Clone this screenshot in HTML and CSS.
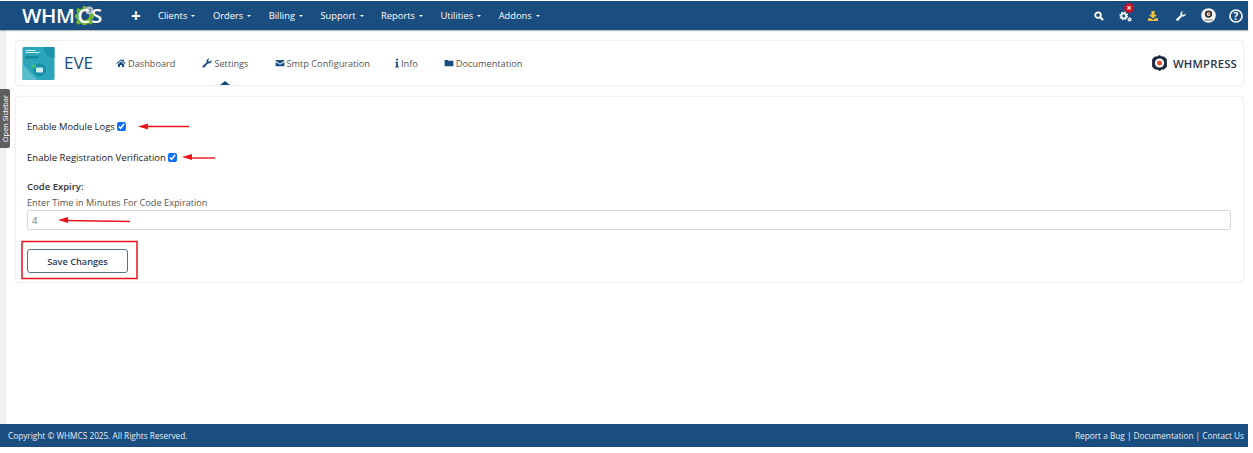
FILE: index.html
```html
<!DOCTYPE html>
<html lang="en">
<head>
<meta charset="utf-8">
<title>EVE Settings</title>
<link rel="stylesheet" href="styles.css">
</head>
<body>
<div class="frame">
  <header class="topbar">
    <div class="logo">WHM<span class="logo-c"><svg class="gear" viewBox="0 0 24 24"><path fill="#74b72e" d="M10 0h4l.7 3.100 2.500 1 2.700-1.700 2.800 2.800-1.700 2.700 1 2.500 3 .6v4l-3 .7-1 2.400 1.700 2.700-2.800 2.800-2.700-1.700-2.500 1-.7 3.100h-4l-.7-3.100-2.500-1-2.700 1.700-2.800-2.800 1.700-2.700-1-2.400-3-.7v-4l3-.6 1-2.500L1.300 5.200 4.100 2.400l2.700 1.700 2.500-1z"/><circle cx="12" cy="12" r="6" fill="#1a4d80"/><circle cx="18" cy="5.500" r="5" fill="#b9c4c4"/><circle cx="18" cy="5.500" r="2" fill="#1a4d80"/></svg><b>C</b></span>S</div>
    <nav class="mainnav">
      <a class="plus">+</a>
      <a>Clients<i class="caret"></i></a>
      <a>Orders<i class="caret"></i></a>
      <a>Billing<i class="caret"></i></a>
      <a>Support<i class="caret"></i></a>
      <a>Reports<i class="caret"></i></a>
      <a>Utilities<i class="caret"></i></a>
      <a>Addons<i class="caret"></i></a>
    </nav>
    <div class="tools">
      <svg class="tool search" viewBox="0 0 16 16"><circle cx="6.500" cy="6.500" r="4.500" fill="none" stroke="#fff" stroke-width="2.800"/><path d="M10 10l4.500 4.500" stroke="#fff" stroke-width="3.200"/></svg>
      <span class="alert-wrap">
        <svg class="tool cogs" viewBox="0 0 16 16" fill="none" stroke="#fff"><circle cx="5.800" cy="8.500" r="3" stroke-width="2.200"/><circle cx="5.800" cy="8.500" r="4.700" stroke-width="1.400" stroke-dasharray="2 1.700"/><circle cx="13" cy="13" r="1.400" stroke-width="1.500"/><circle cx="13" cy="13" r="2.400" stroke-width=".8" stroke-dasharray="1 .9"/></svg>
        <span class="badge">×</span>
      </span>
      <svg class="tool dl" viewBox="0 0 16 16"><path fill="#f0c13a" d="M5.500 0h5v6h4L8 12 1.500 6h4zM0 11.500h4.500L8 14.500l3.500-3H16V16H0z"/></svg>
      <svg class="tool wrench" viewBox="0 0 16 16"><path fill="#fff" d="M15.700 4.200a4.400 4.400 0 0 1-5.900 4.300L3.800 15a2 2 0 0 1-2.900-2.800L7.400 6.300A4.400 4.400 0 0 1 12 .3L9.500 2.900l.7 2.600 2.700.7 2.500-2.600z"/></svg>
      <svg class="tool avatar" viewBox="0 0 16 16"><circle cx="8" cy="8" r="7.800" fill="#f4f4f4"/><circle cx="8" cy="6.500" r="3.900" fill="#2d2d2d"/><circle cx="8" cy="6.500" r="2" fill="#fff"/><circle cx="8" cy="6.500" r="1.100" fill="#e8552d"/><path d="M3.500 12.800h9" stroke="#9a9a9a" stroke-width="1.500"/></svg>
      <svg class="tool help" viewBox="0 0 16 16"><circle cx="8" cy="8" r="6.900" fill="none" stroke="#fff" stroke-width="1.800"/><text x="8" y="12" class="qmark" text-anchor="middle">?</text></svg>
    </div>
  </header>

  <div class="body">
    <div class="sidebar-strip"><button class="open-sidebar"><span>Open Sidebar</span></button></div>
    <main class="content">
      <section class="card head-card">
        <svg class="thumb" viewBox="0 0 32 33"><rect width="32" height="33" rx="1.500" fill="#2aa5ba"/><path d="M21 0a11 11 0 0 0 11 11V0z" fill="#1c93a8"/><path d="M0 17l15 16H0z" fill="#58bccb"/><rect x="3" y="3" width="10" height="1" fill="#d5f2f5"/><rect x="3" y="5" width="14" height="1" fill="#d5f2f5"/><rect x="3" y="9" width="13" height="2.500" fill="#12869c"/><circle cx="17" cy="23" r="6.500" fill="#158ea8"/><rect x="13.500" y="20.500" width="7" height="5" rx="1" fill="#cfeff4"/><circle cx="11.500" cy="19.500" r="2" fill="#3cc06d"/></svg>
        <h1 class="brand">EVE</h1>
        <nav class="tabs">
          <a class="tab t1"><svg class="ti" viewBox="0 0 16 16"><path fill="#1a4d80" d="M8 2L0.500 8.500l1 1L8 4l6.500 5.500 1-1L12.500 6V2.500h-2v1.800zM3 10v4.500h3.500V11h3v3.500H13V10L8 5.700z"/></svg>Dashboard</a>
          <a class="tab t2 active"><svg class="ti" viewBox="0 0 16 16"><path fill="#1a4d80" d="M15.500 4.500a4.300 4.300 0 0 1-5.800 4L4 14.800a1.700 1.700 0 0 1-2.600-2.300L7.500 6.600A4.300 4.300 0 0 1 12.200.8L9.800 3.300l.6 2 2 .6 2.500-2.500a4 4 0 0 1 .6 1.100z"/></svg>Settings</a>
          <a class="tab t3"><svg class="ti" viewBox="0 0 16 16"><path fill="#1a4d80" d="M1 3h14v1.500L8 9 1 4.500zM1 6.300V13h14V6.300L8 10.800z"/></svg>Smtp Configuration</a>
          <a class="tab t4"><svg class="ti narrow" viewBox="0 0 6 16"><path fill="#1a4d80" d="M1.500 1h3v3h-3zM.5 6h4v7h1.300v2H.3v-2h1.300V8H.5z"/></svg>Info</a>
          <a class="tab t5"><svg class="ti" viewBox="0 0 16 16"><path fill="#1a4d80" d="M1 3h5l1.500 1.500H15V13H1z"/></svg>Documentation</a>
        </nav>
        <div class="whmpress">
          <svg class="wp-mark" viewBox="0 0 24 26"><path fill="#1d2a3d" d="M12 0l4 2.500h3.500L24 7v12l-4.500 4.500H16L12 26l-4-2.500H4.500L0 19V7l4.500-4.500H8z"/><circle cx="12" cy="13" r="7.500" fill="#fff"/><circle cx="12" cy="13" r="4" fill="#ef4a23"/></svg>
          <span>WHMPRESS</span>
        </div>
      </section>

      <section class="card form-card">
        <div class="row first"><label>Enable Module Logs</label><input type="checkbox" checked></div>
        <div class="row second"><label>Enable Registration Verification</label><input type="checkbox" checked></div>
        <div class="expiry">
          <label class="bold">Code Expiry:</label>
          <p class="hint">Enter Time in Minutes For Code Expiration</p>
          <input class="text" type="text" value="4">
        </div>
        <button class="save">Save Changes</button>
      </section>
    </main>

    <svg class="marks" viewBox="0 0 1248 394" width="1248" height="394">
      <g fill="#e8141c" stroke="#e8141c">
        <path d="M146 96.500H189" stroke-width="1.400"/><path d="M138 96.500l10-3v6z" stroke="none"/>
        <path d="M190 128H215" stroke-width="1.400"/><path d="M182 127l10-3v6z" stroke="none"/>
        <path d="M66 190.500L130 191.500" stroke-width="1.400"/><path d="M58 190l10-3v6z" stroke="none"/>
      </g>
      <rect x="22" y="211.500" width="115" height="37" fill="none" stroke="#e8141c" stroke-width="1.500"/>
    </svg>
  </div>

  <footer class="footer">
    <span>Copyright © WHMCS 2025. All Rights Reserved.</span>
    <span>Report a Bug | Documentation | Contact Us</span>
  </footer>
</div>
</body>
</html>
```

FILE: styles.css
```css
* { box-sizing: border-box; }
html, body { margin: 0; padding: 0; background: #fff; }
body { font-family: "Open Sans", "Liberation Sans", sans-serif; color: #333; overflow: hidden; height: 453px; }
.frame { width: 1248px; padding-top: 1px; display: flex; flex-direction: column; height: 447px; }

.topbar { height: 29px; background: #1a4d80; display: flex; align-items: center; color: #fff; flex: none; box-shadow: 0 1px 1px rgba(0,0,0,.25); z-index: 2; }
.logo { width: 131px; padding-left: 22px; font-size: 20.500px; font-weight: 600; letter-spacing: -.4px; display: flex; align-items: center; line-height: 1; }
.logo-c { position: relative; display: block; margin: 0 1px 0 3px; }
.logo-c b { position: relative; font-weight: 600; }
.gear { position: absolute; left: -2px; top: 1px; width: 19px; height: 19px; }
.mainnav { display: flex; align-items: center; font-size: 9.350px; gap: 17.500px; }
.mainnav a { display: flex; align-items: center; white-space: nowrap; }
.plus { font-size: 17px; font-weight: 700; width: 10px; line-height: 1; margin-right: -.5px; }
.caret { display: inline-block; width: 0; height: 0; margin-left: 4px; border-left: 2.500px solid transparent; border-right: 2.500px solid transparent; border-top: 2.500px solid #fff; }
.tools { margin-left: auto; display: flex; align-items: center; gap: 15px; padding-right: 5px; }
.tool { display: block; width: 10px; height: 10px; }
.cogs { width: 13px; height: 13px; }
.dl { margin-left: 1px; }
.wrench { margin-left: 3px; }
.avatar { width: 15px; height: 15px; }
.help { width: 14px; height: 14px; margin-left: -2px; }
.qmark { font: 700 11.500px "Open Sans", sans-serif; fill: #fff; }
.alert-wrap { position: relative; display: block; }
.badge { position: absolute; left: 5px; top: -6px; width: 10px; height: 10px; border-radius: 50%; background: #c4122a; color: #fff; font-size: 9px; font-weight: 700; line-height: 9px; text-align: center; }

.body { flex: 1; position: relative; display: flex; background: #fff; min-height: 0; }
.sidebar-strip { width: 6px; flex: none; background: #f1f1f1; border-right: 1px solid #e8e8e8; position: relative; }
.open-sidebar { position: absolute; left: 0; top: 59px; width: 10px; height: 59px; padding: 0; border: 0; border-radius: 0 2px 2px 0; background: #5f5f5f; color: #fff; font: 400 7.400px "Open Sans", sans-serif; display: flex; align-items: center; justify-content: center; z-index: 3; }
.open-sidebar span { writing-mode: vertical-rl; transform: rotate(180deg); white-space: nowrap; }
.content { flex: 1; padding: 10px 4px 0 9px; display: flex; flex-direction: column; gap: 10px; background: #fff; }
.card { background: #fff; border: 1px solid #f0f0f0; border-radius: 4px; box-shadow: 0 0 2px rgba(0,0,0,.05); }

.head-card { height: 46px; display: flex; align-items: center; padding-left: 6px; padding-right: 6px; }
.thumb { width: 33px; height: 33px; flex: none; }
.brand { margin: 0 0 2px 9px; width: 52px; font-size: 17px; font-weight: 500; color: #1a4d80; line-height: 1; }
.tabs { display: flex; align-items: center; font-size: 9.200px; color: #555; height: 100%; }
.tab { display: flex; align-items: center; gap: 2px; position: relative; height: 100%; white-space: nowrap; }
.t1 { margin-right: 27px; }
.t2 { margin-right: 26px; }
.t3 { margin-right: 25px; }
.t4 { margin-right: 26px; }
.ti { width: 10px; height: 10px; flex: none; }
.ti.narrow { width: 4px; }
.active::after { content: ""; position: absolute; left: 18px; bottom: 0; width: 0; height: 0; border-left: 5px solid transparent; border-right: 5px solid transparent; border-bottom: 4px solid #1a4d80; }
.whmpress { margin-left: auto; display: flex; align-items: center; gap: 6px; font-size: 11.300px; font-weight: 600; color: #27344b; letter-spacing: .2px; }
.wp-mark { width: 15px; height: 16px; }

.form-card { height: 187px; padding: 0 11px; display: flex; flex-direction: column; align-items: flex-start; font-size: 9.500px; }
.row { display: flex; align-items: center; gap: 2px; color: #222; font-weight: 500; height: 12px; }
.first { margin-top: 23px; font-size: 9.400px; }
.second { margin-top: 19px; font-size: 9.570px; }
.row input { margin: 0; width: 9px; height: 9px; accent-color: #0d6efd; }
.expiry { margin-top: 18px; width: 100%; padding-right: 1px; display: flex; flex-direction: column; align-items: flex-start; }
.bold { font-weight: 600; line-height: 12px; }
.hint { margin: 4px 0 0; line-height: 12px; color: #555; font-size: 9.200px; }
.text { width: 100%; height: 20px; margin-top: 1px; border: 1px solid #d9d9d9; border-radius: 2px; padding: 0 4px; font: 400 9.500px "Open Sans", sans-serif; color: #777; }
.save { margin-top: 19px; width: 101px; height: 24px; background: #fff; border: 1px solid #5a7089; border-radius: 3px; font: 600 9.200px "Open Sans", sans-serif; color: #1f3d60; }

.marks { position: absolute; left: 0; top: 0; pointer-events: none; }

.footer { height: 23px; flex: none; background: #1a4d80; color: #e8eef5; display: flex; align-items: center; justify-content: space-between; padding: 0 4px 0 8px; font-size: 8.250px; }
```
